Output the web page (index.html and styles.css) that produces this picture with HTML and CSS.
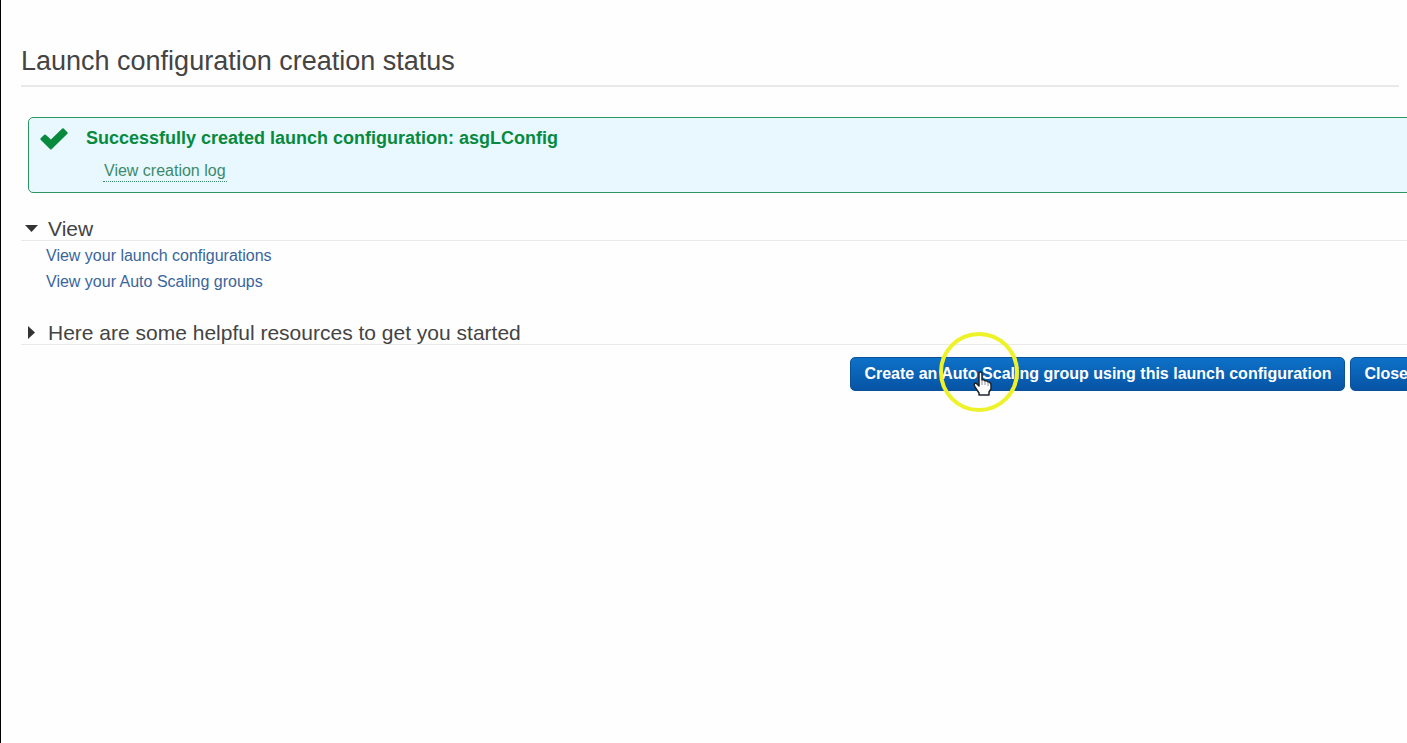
FILE: index.html
```html
<!DOCTYPE html>
<html lang="en">
<head>
<meta charset="utf-8">
<title>Launch configuration creation status</title>
<link rel="stylesheet" href="styles.css">
</head>
<body>
<main class="page">
  <h1 class="title">Launch configuration creation status</h1>
  <div class="content">
    <section class="banner">
      <svg class="check" viewBox="0 0 28 22" aria-hidden="true"><path d="M0.6 10.2 4.3 6.7Q5 6.1 5.7 6.7L10.9 11.4 22.3 0.6Q23 0 23.7 0.6L27.4 4.3Q28 5 27.4 5.7L11.6 21.3Q10.9 21.9 10.2 21.3L0.6 11.7Q0 11 0.6 10.2Z"/></svg>
      <div>
        <h2 class="message">Successfully created launch configuration: asgLConfig</h2>
        <a class="log" href="#">View creation log</a>
      </div>
    </section>
    <section class="section">
      <h2><button class="toggle" type="button" aria-expanded="true"><svg class="arrow" viewBox="0 0 13 13" aria-hidden="true"><path d="M0 3H13L6.5 10Z"/></svg>View</button></h2>
      <ul class="links">
        <li><a href="#">View your launch configurations</a></li>
        <li><a href="#">View your Auto Scaling groups</a></li>
      </ul>
    </section>
    <section class="section">
      <h2><button class="toggle" type="button" aria-expanded="false"><svg class="arrow" viewBox="0 0 13 13" aria-hidden="true"><path d="M3 0V13L10 6.5Z"/></svg>Here are some helpful resources to get you started</button></h2>
    </section>
    <div class="actions">
      <button class="primary" type="button">Create an Auto Scaling group using this launch configuration
        <svg class="pointer" viewBox="0 0 80 80" aria-hidden="true">
          <circle cx="40" cy="40" r="38" fill="none" stroke="#eef229" stroke-width="4"/>
          <path d="M40 41Q41.5 39 43 41V48Q45 47 46 49Q48 48 49 50Q52 50 52 53V57L50 60V63H40V61L36 55Q34 51 37 51L40 54Z" fill="#fff" stroke="#1c2430" stroke-width="1.5" stroke-linejoin="round"/>
          <path d="M43 48V53M46 49V53M49 50V54" fill="none" stroke="#8b929b"/>
        </svg>
      </button>
      <button class="primary" type="button">Close</button>
    </div>
  </div>
</main>
</body>
</html>
```
FILE: styles.css
```css
* { box-sizing: border-box; }
body {
  margin: 0;
  font-family: "Liberation Sans", Arial, sans-serif;
  font-size: 16px;
  color: #444;
  background: #fefefe;
}
h1, h2, ul { margin: 0; padding: 0; font-weight: 400; }
.page {
  min-height: 100vh;
  padding: 44px 0 0 20px;
  border-left: 1px solid #000;
  overflow: hidden;
}
.title {
  margin-right: 8px;
  padding-bottom: 6px;
  border-bottom: 2px solid #e8e9e9;
  font-size: 27px;
  line-height: 35px;
}
.content { margin-right: -15px; }
.banner {
  display: flex;
  gap: 18px;
  height: 76px;
  margin: 30px 0 0 7px;
  padding: 10px 11px;
  border: 1px solid #2c9560;
  border-radius: 5px;
  background: #e9f8fe;
}
.check { width: 28px; height: 22px; fill: #078a3e; }
.message {
  color: #078a3e;
  font-size: 18px;
  font-weight: 700;
  line-height: 20px;
}
.log {
  display: inline-block;
  margin: 13px 0 0 17px;
  padding: 0 1px;
  border-bottom: 1px dotted #3b8a6b;
  color: #3b8a6b;
  line-height: 20px;
  text-decoration: none;
}
.section { padding-top: 24px; }
.section h2 { border-bottom: 1px solid #e9e9e9; }
.toggle {
  display: flex;
  align-items: center;
  gap: 10px;
  padding: 0 0 0 4px;
  border: 0;
  background: none;
  color: #444;
  font: 21px/23px "Liberation Sans", Arial, sans-serif;
}
.arrow { width: 13px; height: 13px; fill: #333; }
.links {
  padding: 2px 0 2px 25px;
  line-height: 26px;
  list-style: none;
}
.links a { color: #3a659b; text-decoration: none; }
.actions {
  display: flex;
  justify-content: flex-end;
  gap: 5px;
  padding-top: 12px;
}
.primary {
  position: relative;
  height: 34px;
  padding: 0 13px;
  border: 1px solid #0b5299;
  border-radius: 5px;
  background: linear-gradient(#0d72c8, #0753a4);
  color: #fff;
  font: 700 16px/20px "Liberation Sans", Arial, sans-serif;
}
.pointer {
  position: absolute;
  top: -26px;
  left: 88px;
  width: 80px;
  height: 80px;
}
```
